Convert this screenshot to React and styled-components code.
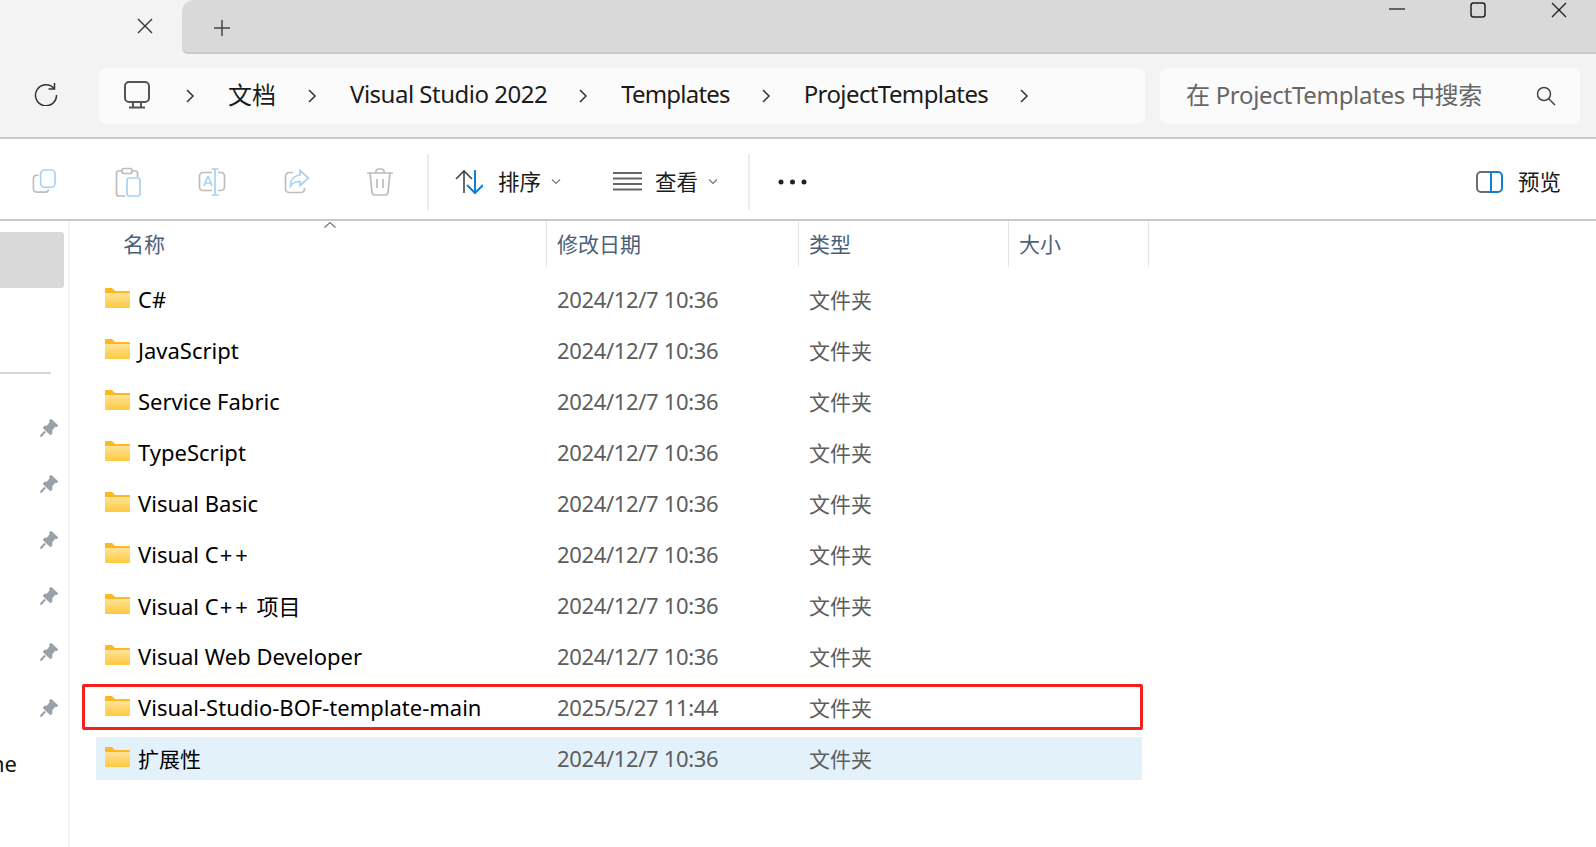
import styled, { createGlobalStyle } from "styled-components";

const GlobalStyle = createGlobalStyle`
  html, body {
    margin: 0;
    height: 100%;
    background: #ffffff;
    overflow: hidden;
    font-family: "Noto Sans", "Noto Sans CJK SC", sans-serif;
  }
  #root { height: 100%; }
`;

const Page = styled.div`
  width: 1596px;
  height: 847px;
  display: flex;
  flex-direction: column;
  overflow: hidden;
`;

/* title strip */
const TitleBar = styled.div`
  display: flex;
  height: 54px;
  background: #f3f3f3;
`;

const ActiveTab = styled.div`
  width: 182px;
  display: flex;
  justify-content: flex-end;
  padding: 18px 29px 0 0;
  box-sizing: border-box;
  color: #333;
`;

const TabRest = styled.div`
  flex: 1;
  display: flex;
  justify-content: space-between;
  background: #d9d9d9;
  border-bottom: 2px solid #c9c9c9;
  border-radius: 12px 0 0 6px;
`;

const NewTab = styled.div`
  padding: 19px 0 0 31px;
  color: #444;
`;

const WindowButtons = styled.div`
  display: flex;
  gap: 65px;
  padding: 2px 29px 0 0;
  color: #222;
`;

/* address row */
const NavBar = styled.div`
  display: flex;
  align-items: center;
  height: 83px;
  background: #f3f3f3;
  border-bottom: 2px solid #c9c9c9;
`;

const Refresh = styled.div`
  width: 99px;
  padding: 0 7px 4px 0;
  box-sizing: border-box;
  display: flex;
  justify-content: center;
  color: #333;
`;

const AddressBox = styled.div`
  width: 1046px;
  height: 56px;
  display: flex;
  align-items: center;
  background: #fbfbfb;
  border-radius: 8px;
  padding-left: 25px;
  box-sizing: border-box;
  color: #1b1b1b;
`;

const Crumb = styled.span`
  font-size: 24px;
  letter-spacing: ${(p) => p.$spacing}px;
  padding-bottom: 4px;
  white-space: nowrap;
`;

const CrumbArrow = styled.svg`
  margin: 0 33px 0 31px;
  flex-shrink: 0;
`;

const HomeIcon = styled.svg`
  margin: 0 4px 2px 0;
`;

const SearchBox = styled.div`
  width: 420px;
  height: 56px;
  margin-left: 15px;
  display: flex;
  align-items: center;
  justify-content: space-between;
  background: #fbfbfb;
  border-radius: 8px;
  padding: 0 24px 0 26px;
  box-sizing: border-box;
  font-size: 24px;
  letter-spacing: -0.3px;
  color: #666;
`;

const SearchText = styled.span`
  padding-bottom: 4px;
`;

/* command bar */
const CommandBar = styled.div`
  display: flex;
  align-items: center;
  height: 82px;
  padding-top: 5px;
  box-sizing: border-box;
  border-bottom: 2px solid #c9c9c9;
  flex-shrink: 0;
`;

const CommandIcons = styled.div`
  display: flex;
  align-items: center;
  gap: 57.5px;
  padding-left: 32px;
`;

const Divider = styled.div`
  width: 2px;
  height: 56px;
  background: #ececec;
  margin: ${(p) => p.$margin};
`;

const CommandLabel = styled.span`
  font-size: 21.5px;
  color: #1b1b1b;
  margin: ${(p) => p.$margin};
  padding-bottom: 2px;
`;

const CommandGap = styled.div`
  width: 52px;
`;

const Spacer = styled.div`
  flex: 1;
`;

/* body */
const Body = styled.div`
  flex: 1;
  display: flex;
  min-height: 0;
`;

const Sidebar = styled.div`
  width: 70px;
  flex-shrink: 0;
  border-right: 2px solid #f4f4f4;
  box-sizing: border-box;
  padding-top: 11px;
  display: flex;
  flex-direction: column;
`;

const SideSelected = styled.div`
  width: 64px;
  height: 56px;
  background: #d9d9d9;
  border-radius: 0 3px 3px 0;
`;

const SideRule = styled.div`
  width: 51px;
  height: 2px;
  background: #d6d6d6;
  margin: 84px 0 44px;
`;

const Pins = styled.div`
  display: flex;
  flex-direction: column;
  align-items: flex-end;
  gap: 36px;
  padding-right: 9px;
  color: #98a1a9;
`;

const SideText = styled.div`
  font-size: 22px;
  line-height: 30px;
  margin: 30px 0 0 -9px;
  color: #111;
`;

const Main = styled.div`
  flex: 1;
  min-width: 0;
`;

const HeaderRow = styled.div`
  position: relative;
  display: grid;
  grid-template-columns: 477px 252px 210px 140px;
  height: 46px;
`;

const HeaderCell = styled.div`
  display: flex;
  align-items: center;
  padding: 0 0 2px ${(p) => p.$pad || 10}px;
  border-right: 1px solid #e5e5e5;
  font-size: 21px;
  color: #4c607a;
`;

const SortCaret = styled.svg`
  position: absolute;
  left: 253px;
  top: 0;
`;

const List = styled.div`
  display: flex;
  flex-direction: column;
  gap: 8px;
  padding: 11px 0 0 26px;
`;

const Row = styled.div`
  position: relative;
  width: 1046px;
  height: 43px;
  display: grid;
  grid-template-columns: 451px 252px 1fr;
  align-items: center;
  background: ${(p) => (p.$selected ? "#e3f1fb" : "transparent")};
`;

const NameCell = styled.div`
  display: flex;
  align-items: center;
  gap: 8px;
  padding: 0 0 2px 9px;
  font-size: 22px;
  color: #000;
  white-space: nowrap;
`;

const FolderIcon = styled.svg`
  margin-bottom: 2px;
  flex-shrink: 0;
`;

const NameText = styled.span`
  font-size: ${(p) => (p.$cjk ? 21 : 22)}px;
  white-space: pre;
`;

const Pluses = styled.span`
  letter-spacing: 3px;
  margin-left: 1px;
`;

const DateCell = styled.div`
  padding: 0 0 2px 10px;
  font-size: 22px;
  letter-spacing: -0.35px;
  color: #5d5d5d;
`;

const TypeCell = styled.div`
  padding: 0 0 2px 10px;
  font-size: 21px;
  color: #5d5d5d;
`;

const Highlight = styled.div`
  position: absolute;
  left: -14px;
  right: -1px;
  top: -2px;
  bottom: -1px;
  border: 3px solid #f5201c;
  border-radius: 2px;
`;

/* icons */
const Chevron = () => (
  <CrumbArrow width="10" height="16" viewBox="0 0 10 16" fill="none" stroke="#333" strokeWidth="1.5">
    <path d="M2 2l6 6-6 6" />
  </CrumbArrow>
);

const Caret = () => (
  <svg width="10" height="7" viewBox="0 0 10 7" fill="none" stroke="#777" strokeWidth="1.2">
    <path d="M1 1.500l4 4 4-4" />
  </svg>
);

const Folder = () => (
  <FolderIcon width="25" height="20" viewBox="0 0 25 20">
    <defs>
      <linearGradient id="folderFill" x1="0" y1="0" x2="0" y2="1">
        <stop offset="0" stopColor="#ffe39a" />
        <stop offset="1" stopColor="#ffc93f" />
      </linearGradient>
    </defs>
    <path d="M0 1a1 1 0 0 1 1-1h6l3 3h14a1 1 0 0 1 1 1v2H0z" fill="#fbb81f" />
    <path d="M0 5h24a1 1 0 0 1 1 1v13a1 1 0 0 1-1 1H1a1 1 0 0 1-1-1z" fill="url(#folderFill)" />
  </FolderIcon>
);

const Pin = () => (
  <svg width="20" height="20" viewBox="0 0 20 20" fill="currentColor" stroke="currentColor">
    <path d="M12 1l7 6.500-1.500 1.500-1.500-.5-3 4v3l-1.500 1.500-7.500-7L5.500 8h2.500l3-4-.5-1.500z" strokeWidth="0.6" />
    <path d="M6 13.500L1.500 18.500" strokeWidth="2" fill="none" />
  </svg>
);

const LIGHT = "#bdbdbd";
const BLUE = "#a6d2f5";

const CopyIcon = () => (
  <svg width="25" height="25" viewBox="0 0 26 26" fill="none" strokeWidth="1.7">
    <path d="M7 6.500H4.500A3 3 0 0 0 1.500 9.500v11a3.500 3.500 0 0 0 3.500 3.500h9a3 3 0 0 0 3-3" stroke={LIGHT} />
    <rect x="9" y="1" width="15" height="18" rx="4" stroke={BLUE} />
  </svg>
);

const PasteIcon = () => (
  <svg width="26" height="30" viewBox="0 0 26 30" fill="none" strokeWidth="1.7">
    <path d="M7 4H3.500a2 2 0 0 0-2 2v21a2 2 0 0 0 2 2H10M17 4h3.500a2 2 0 0 1 2 2v4" stroke={LIGHT} />
    <rect x="7" y="1.500" width="10" height="5" rx="2" stroke={LIGHT} />
    <rect x="12" y="11" width="13" height="18" rx="2.500" stroke={BLUE} />
  </svg>
);

const RenameIcon = () => (
  <svg width="28" height="28" viewBox="0 0 28 28" fill="none" strokeWidth="1.7">
    <path d="M14 4.500H5a3.500 3.500 0 0 0-3.500 3.500v11A3.500 3.500 0 0 0 5 22.500h9M20 4.500h3a3.500 3.500 0 0 1 3.500 3.500v11a3.500 3.500 0 0 1-3.500 3.500h-3" stroke={LIGHT} />
    <path d="M13.500 1h7M17 1v26M13.500 27h7M6 18l3.500-9h1l3.500 9M7.300 15h5.400" stroke={BLUE} />
  </svg>
);

const ShareIcon = () => (
  <svg width="26" height="26" viewBox="0 0 26 26" fill="none" strokeWidth="1.7">
    <path d="M9 3.500H5A3.500 3.500 0 0 0 1.500 7v13A3.500 3.500 0 0 0 5 23.500h12a3.500 3.500 0 0 0 3.500-3.500v-1" stroke={LIGHT} />
    <path d="M16 1.500l8.500 7.500-8.500 7.500v-4c-4 0-7 1-9.500 4.500 0-6 3.500-10.500 9.500-11z" stroke={BLUE} />
  </svg>
);

const TrashIcon = () => (
  <svg width="26" height="28" viewBox="0 0 26 28" fill="none" stroke={LIGHT} strokeWidth="1.7">
    <path d="M0 5h26M9 5V3.500A2.500 2.500 0 0 1 11.500 1h3A2.500 2.500 0 0 1 17 3.500V5M3 5l2 19a3 3 0 0 0 3 3h10a3 3 0 0 0 3-3l2-19M10 11v9M16 11v9" />
  </svg>
);

const SortIcon = () => (
  <svg width="28" height="26" viewBox="0 0 28 26" fill="none" strokeWidth="2">
    <path d="M1 10l8-8 8 8M9 2v22" stroke="#444" strokeWidth="1.600" />
    <path d="M12 16l8 8 8-8M20 1v23" stroke="#0f7fdc" />
  </svg>
);

const ListIcon = () => (
  <svg width="29" height="19" viewBox="0 0 29 19" stroke="#666" strokeWidth="1.800">
    <path d="M0 1h29M0 6.500h29M0 12h29M0 17.500h29" />
  </svg>
);

const PreviewIcon = () => (
  <svg width="27" height="22" viewBox="0 0 27 22" fill="none" strokeWidth="2">
    <path d="M15 1H5a4 4 0 0 0-4 4v12a4 4 0 0 0 4 4h10" stroke="#666f78" />
    <path d="M15 1h7a4 4 0 0 1 4 4v12a4 4 0 0 1-4 4h-7z" stroke="#0f7fdc" />
  </svg>
);

const Monitor = () => (
  <HomeIcon width="26" height="28" viewBox="0 0 26 28" fill="none" stroke="#555" strokeWidth="2">
    <rect x="1" y="1" width="24" height="20" rx="4" />
    <path d="M9 21v5M17 21v5M5 26.500h16" />
  </HomeIcon>
);

const folders = [
  { name: "C#", date: "2024/12/7 10:36" },
  { name: "JavaScript", date: "2024/12/7 10:36" },
  { name: "Service Fabric", date: "2024/12/7 10:36" },
  { name: "TypeScript", date: "2024/12/7 10:36" },
  { name: "Visual Basic", date: "2024/12/7 10:36" },
  { name: "Visual C", plus: "++", date: "2024/12/7 10:36" },
  { name: "Visual C", plus: "++", tail: " 项目", date: "2024/12/7 10:36" },
  { name: "Visual Web Developer", date: "2024/12/7 10:36" },
  { name: "Visual-Studio-BOF-template-main", date: "2025/5/27 11:44", marked: true },
  { name: "扩展性", date: "2024/12/7 10:36", selected: true, cjk: true },
];

const crumbs = [
  { text: "文档", spacing: 0 },
  { text: "Visual Studio 2022", spacing: -0.5 },
  { text: "Templates", spacing: -0.8 },
  { text: "ProjectTemplates", spacing: -0.6 },
];

const App = () => {
  return (
    <Page>
      <GlobalStyle />
      <TitleBar>
        <ActiveTab>
          <svg width="16" height="16" viewBox="0 0 16 16" stroke="currentColor" strokeWidth="1.400">
            <path d="M1 1l14 14M15 1L1 15" />
          </svg>
        </ActiveTab>
        <TabRest>
          <NewTab>
            <svg width="18" height="18" viewBox="0 0 18 18" stroke="currentColor" strokeWidth="1.500">
              <path d="M9 1v16M1 9h16" />
            </svg>
          </NewTab>
          <WindowButtons>
            <svg width="16" height="16" viewBox="0 0 16 16" stroke="currentColor" strokeWidth="1.300">
              <path d="M0 7h16" />
            </svg>
            <svg width="16" height="16" viewBox="0 0 16 16" fill="none" stroke="currentColor" strokeWidth="1.500">
              <rect x="1" y="1" width="14" height="14" rx="2.500" />
            </svg>
            <svg width="16" height="16" viewBox="0 0 16 16" stroke="currentColor" strokeWidth="1.400">
              <path d="M1 1l14 14M15 1L1 15" />
            </svg>
          </WindowButtons>
        </TabRest>
      </TitleBar>

      <NavBar>
        <Refresh>
          <svg width="24" height="24" viewBox="0 0 24 24" fill="none" stroke="currentColor" strokeWidth="1.500">
            <path d="M20 6.500A10.500 10.500 0 1 0 22.500 13" />
            <path d="M20.500 1v6h-6" />
          </svg>
        </Refresh>
        <AddressBox>
          <Monitor />
          <Chevron />
          {crumbs.flatMap((c) => [
            <Crumb key={c.text} $spacing={c.spacing}>
              {c.text}
            </Crumb>,
            <Chevron key={`${c.text}-arrow`} />,
          ])}
        </AddressBox>
        <SearchBox>
          <SearchText>在 ProjectTemplates 中搜索</SearchText>
          <svg width="20" height="20" viewBox="0 0 20 20" fill="none" stroke="#444" strokeWidth="1.500">
            <circle cx="8" cy="8" r="6.500" />
            <path d="M12.500 12.500L19 19" />
          </svg>
        </SearchBox>
      </NavBar>

      <CommandBar>
        <CommandIcons>
          <CopyIcon />
          <PasteIcon />
          <RenameIcon />
          <ShareIcon />
          <TrashIcon />
        </CommandIcons>
        <Divider $margin="0 26px 0 34px" />
        <SortIcon />
        <CommandLabel $margin="0 10px 0 15px">排序</CommandLabel>
        <Caret />
        <CommandGap />
        <ListIcon />
        <CommandLabel $margin="0 10px 0 13px">查看</CommandLabel>
        <Caret />
        <Divider $margin="0 28px 0 30px" />
        <svg width="29" height="6" viewBox="0 0 29 6" fill="#222">
          <circle cx="3" cy="3" r="2.500" />
          <circle cx="14.500" cy="3" r="2.500" />
          <circle cx="26" cy="3" r="2.500" />
        </svg>
        <Spacer />
        <PreviewIcon />
        <CommandLabel $margin="0 35px 0 15px">预览</CommandLabel>
      </CommandBar>

      <Body>
        <Sidebar>
          <SideSelected />
          <SideRule />
          <Pins>
            <Pin />
            <Pin />
            <Pin />
            <Pin />
            <Pin />
            <Pin />
          </Pins>
          <SideText>ne</SideText>
        </Sidebar>
        <Main>
          <HeaderRow>
            <HeaderCell $pad={53}>名称</HeaderCell>
            <HeaderCell>修改日期</HeaderCell>
            <HeaderCell>类型</HeaderCell>
            <HeaderCell>大小</HeaderCell>
            <SortCaret width="14" height="8" viewBox="0 0 14 8" fill="none" stroke="#777" strokeWidth="1.200">
              <path d="M1.500 6.500L7 1.500l5.500 5" />
            </SortCaret>
          </HeaderRow>
          <List>
            {folders.map((f, i) => (
              <Row key={i} $selected={f.selected}>
                <NameCell>
                  <Folder />
                  <NameText $cjk={f.cjk}>
                    {f.name}
                    {f.plus && <Pluses>{f.plus}</Pluses>}
                    {f.tail}
                  </NameText>
                </NameCell>
                <DateCell>{f.date}</DateCell>
                <TypeCell>文件夹</TypeCell>
                {f.marked && <Highlight />}
              </Row>
            ))}
          </List>
        </Main>
      </Body>
    </Page>
  );
};

export default App;
